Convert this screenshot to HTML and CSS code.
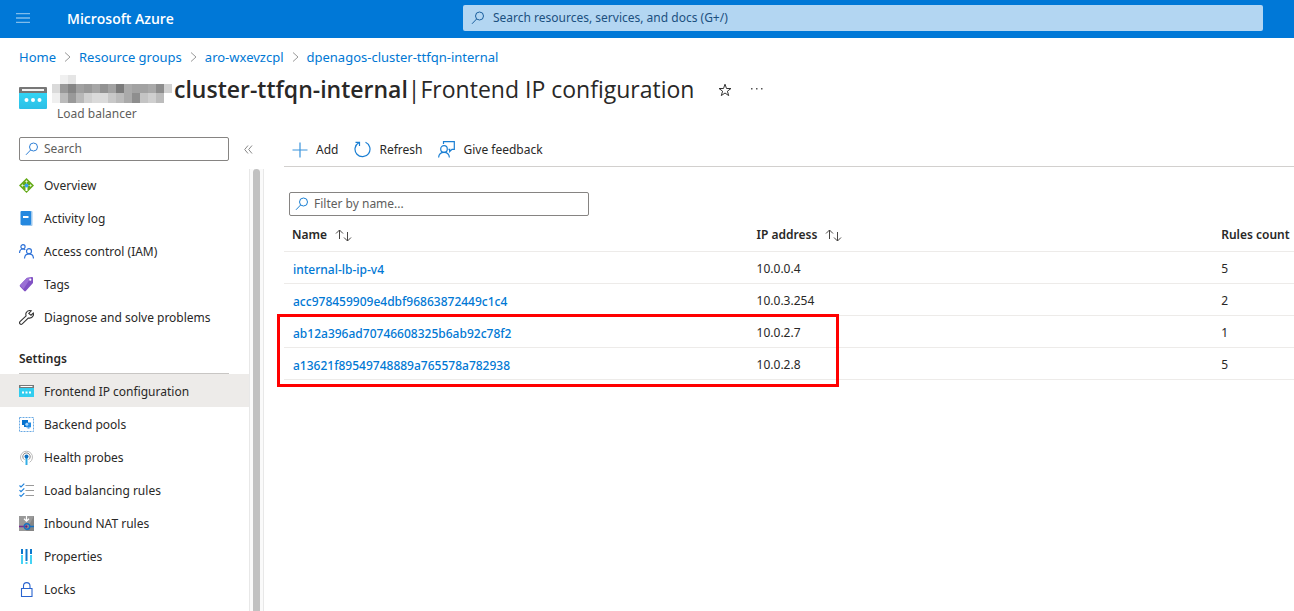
FILE: index.html
```html
<!DOCTYPE html>
<html lang="en">
<head>
<meta charset="utf-8">
<title>Frontend IP configuration - Microsoft Azure</title>
<link rel="stylesheet" href="styles.css">
</head>
<body>
<header class="topbar">
  <button class="menu-button" aria-label="Show portal menu">
    <svg width="14" height="10" viewBox="0 0 14 10"><path d="M0 .5h14M0 5h14M0 9.500h14" stroke="#80bceb" stroke-width="1.300"/></svg>
  </button>
  <a class="brand" href="#">Microsoft Azure</a>
  <label class="global-search">
    <svg width="14" height="14" viewBox="0 0 14 14" fill="none" stroke="#1b5f9e"><circle cx="8.500" cy="5" r="4"/><path d="M5.600 8 1 12.800"/></svg>
    <input type="text" aria-label="Search resources" placeholder="Search resources, services, and docs (G+/)">
  </label>
</header>

<nav class="breadcrumb" aria-label="Breadcrumb">
  <a href="#">Home</a>
  <svg width="7" height="10" viewBox="0 0 7 10"><path d="M1 .5 6 5 1 9.500"/></svg>
  <a href="#">Resource groups</a>
  <svg width="7" height="10" viewBox="0 0 7 10"><path d="M1 .5 6 5 1 9.500"/></svg>
  <a href="#">aro-wxevzcpl</a>
  <svg width="7" height="10" viewBox="0 0 7 10"><path d="M1 .5 6 5 1 9.500"/></svg>
  <a href="#">dpenagos-cluster-ttfqn-internal</a>
</nav>

<section class="heading">
  <svg class="resource-icon" width="28" height="22" viewBox="0 0 28 22">
    <defs><linearGradient id="lb" x1="0" y1="0" x2="0" y2="1"><stop offset="0" stop-color="#32d4f5"/><stop offset="1" stop-color="#2cbfe6"/></linearGradient></defs>
    <path d="M1 0h26q1 0 1 1v5H0V1q0-1 1-1z" fill="#777"/><path d="M3 2h22v2H3z" fill="#f4f4f4"/>
    <path d="M0 6h28v15q0 1-1 1H1q-1 0-1-1z" fill="url(#lb)"/>
    <circle cx="7.500" cy="13" r="2" fill="#fff"/><circle cx="14" cy="13" r="2" fill="#fff"/><circle cx="20.500" cy="13" r="2" fill="#fff"/>
  </svg>
  <div class="heading-text">
    <div class="title-row">
      <svg class="redaction" width="122" height="28" viewBox="0 0 122 28" shape-rendering="crispEdges">
        <path fill="#f0f0f0" d="M8 0h8v9H8z"/><path fill="#e5e5e5" d="M16 0h8v9h-8z"/>
        <path fill="#dadada" d="M0 9h8v9H0z"/><path fill="#999" d="M8 9h8v9H8z"/><path fill="#858585" d="M16 9h8v9h-8z"/><path fill="#a1a1a1" d="M24 9h8v9h-8z"/><path fill="#999" d="M32 9h8v9h-8z"/><path fill="#a6a6a6" d="M40 9h8v9h-8z"/><path fill="#929292" d="M48 9h8v9h-8z"/><path fill="#a2a2a2" d="M56 9h8v9h-8z"/><path fill="#7b7b7b" d="M64 9h8v9h-8z"/><path fill="#aaa" d="M72 9h8v9h-8z"/><path fill="#a2a2a2" d="M80 9h16v9H80z"/><path fill="#a9a9a9" d="M96 9h8v9h-8z"/><path fill="#8d8d8d" d="M104 9h8v9h-8z"/><path fill="#d1d1d1" d="M112 9h8v9h-8z"/>
        <path fill="#efefef" d="M0 18h8v10H0z"/><path fill="#bbb" d="M8 18h8v10H8z"/><path fill="#999" d="M16 18h8v10h-8z"/><path fill="#b8b8b8" d="M24 18h8v10h-8z"/><path fill="#d0d0d0" d="M32 18h8v10h-8z"/><path fill="#dadada" d="M40 18h16v10H40z"/><path fill="#c8c8c8" d="M56 18h8v10h-8z"/><path fill="#bbb" d="M64 18h8v10h-8z"/><path fill="#aaa" d="M72 18h8v10h-8z"/><path fill="#8e8e8e" d="M80 18h8v10h-8z"/><path fill="#c4c4c4" d="M88 18h8v10h-8z"/><path fill="#cfcfcf" d="M96 18h8v10h-8z"/><path fill="#bcbcbc" d="M104 18h8v10h-8z"/>
      </svg>
      <h1><strong>cluster-ttfqn-internal</strong> <span>|</span> <span>Frontend IP configuration</span></h1>
      <button class="star" aria-label="Add to favorites"><svg width="14" height="14" viewBox="0 0 14 14" fill="none" stroke="#333"><path d="m7 1.200 1.500 4.300H13L9.400 8.200l1.300 4.400L7 10l-3.700 2.600 1.300-4.400L1 5.500h4.500z"/></svg></button>
      <button class="more" aria-label="More"><svg width="12" height="2" viewBox="0 0 12 2" fill="#555"><path d="M0 0h1.500v1.500H0zM5 0h1.500v1.500H5zM10 0h1.500v1.500H10z"/></svg></button>
    </div>
    <p class="kind">Load balancer</p>
  </div>
</section>

<div class="workspace">
  <aside class="sidebar">
    <div class="side-search">
      <label class="field">
        <svg width="14" height="14" viewBox="0 0 14 14" fill="none" stroke="#2f7fd6"><circle cx="8.500" cy="5" r="4"/><path d="M5.600 8 1 12.800"/></svg>
        <input type="text" aria-label="Search menu" placeholder="Search">
      </label>
      <button class="collapse" aria-label="Collapse menu"><svg width="9" height="9" viewBox="0 0 9 9" fill="none" stroke="#888"><path d="M4 .5 .7 4.500 4 8.500M8 .5 4.700 4.500 8 8.500"/></svg></button>
    </div>
    <div class="side-scroll">
      <nav class="menu" aria-label="Resource menu">
        <a href="#"><svg width="15" height="15" viewBox="0 0 15 15"><path d="m7.500 0 7.500 7.500-7.500 7.500L0 7.500z" fill="#65aa18"/><path d="M7.500 2 9 4H6zM2 7.500 4 6v3zM13 7.500 11 6v3z" fill="#e6f5d0"/><path d="M7 4h1v3H7zM4 7h7v1H4z" fill="#b8dd80"/><path d="M6.500 9h2v4h-2z" fill="#fff"/><circle cx="7.500" cy="7.500" r="2" fill="#3aa0ea"/></svg>Overview</a>
        <a href="#"><svg width="15" height="15" viewBox="0 0 15 15"><path d="M3 0h9.500q1 0 1 1v13q0 1-1 1H3z" fill="#9ec8ee"/><path d="M2.500 0H11q1 0 1 1v12q0 1-1 1H2.500q-1 0-1-1V1q0-1 1-1z" fill="#2588df"/><path d="M4 5h5.500v2H4z" fill="#fff"/></svg>Activity log</a>
        <a href="#"><svg width="15" height="15" viewBox="0 0 15 15" fill="none" stroke="#2f73d8" stroke-width="1.200"><circle cx="4" cy="2.800" r="2.100"/><path d="M.6 9V8q.4-3 3.400-3 1.500 0 2.300.8"/><circle cx="10" cy="7.200" r="2.500"/><path d="M5.500 14.500q.2-4.600 4.500-4.600t4.500 4.600"/></svg>Access control (IAM)</a>
        <a href="#"><svg width="15" height="15" viewBox="0 0 15 15"><path d="M8 .8 13 0q1 0 1 1v5L6.800 14q-.8.800-1.600 0L1 9.500q-.7-.8 0-1.500z" fill="#8151c4"/><path d="m7.500 1.300 4.500-.7L4.500 12 1 8.300z" fill="#9b70d5"/><circle cx="11.300" cy="2.700" r="1.100" fill="#fff"/></svg>Tags</a>
        <a href="#"><svg width="15" height="15" viewBox="0 0 15 15" fill="none" stroke="#333" stroke-width="1.100"><path d="M12.200.8Q8.500-.2 7 3q-.4 1.500.1 2.900L1 11.600q-1 1.200 0 2.200t2.300.1L9.200 8q3.500.8 5-2.200.5-1.500.1-2.700L12 5.200 9.800 3.500z"/></svg>Diagnose and solve problems</a>
        <h2>Settings</h2>
        <a href="#" class="current" aria-current="page"><svg width="15" height="15" viewBox="0 0 15 15"><path d="M0 1h15v3H0z" fill="#777"/><path d="M1.500 2h12v1h-12z" fill="#fff"/><path d="M0 4h15v9H0z" fill="#32cdef"/><path d="M3 7.500h2v2H3zM6.500 7.500h2v2h-2zM10 7.500h2v2h-2z" fill="#fff"/></svg>Frontend IP configuration</a>
        <a href="#"><svg width="15" height="15" viewBox="0 0 15 15"><path d="M.5.500h14v14H.5z" fill="none" stroke="#69a9e3" stroke-dasharray="2 1"/><path d="M3 3h6v5H3z" fill="#0873ce"/><path d="M5 8h2v2H5z" fill="#0873ce"/><path d="M7 5.500h5v4.800H7z" fill="#238be2"/><path d="M8.500 10h2v1.700h-2z" fill="#5aa8ef"/><circle cx="7.800" cy="7.300" r="1.500" fill="#a9d5fa"/></svg>Backend pools</a>
        <a href="#"><svg width="15" height="15" viewBox="0 0 15 15" fill="none"><path d="M4.300 12.300A6 6 0 1 1 10.700 12.300" stroke="#bbb"/><path d="M5.300 9.600A3.700 3.700 0 1 1 9.700 9.600" stroke="#888"/><path d="M6.500 7h2v8h-2z" fill="#34aee5"/><circle cx="7.500" cy="6.500" r="2" fill="#0b6fc2"/></svg>Health probes</a>
        <a href="#"><svg width="15" height="15" viewBox="0 0 15 15" fill="none"><path d="M6.500 2.500H15M6.500 7.500H15M6.500 12.500H15" stroke="#999" stroke-width="1.200"/><path d="m.5 2.500 1.500 1.500L5.300.7M.5 7.200 2 8.700l3.300-3.300M.5 11.900 2 13.400l3.300-3.300" stroke="#1f83dd" stroke-width="1.200"/></svg>Load balancing rules</a>
        <a href="#"><svg width="15" height="15" viewBox="0 0 15 15" fill="none"><path d="M0 0h15v15H0z" fill="#999"/><path d="M15 0v15H7z" fill="#858585"/><path d="M7.500 0v5M5 2.800l2.500 2.400L10 2.800" stroke="#fff" stroke-width="1.200"/><path d="M0 10.500h6" stroke="#7a2a91" stroke-width="1.500"/><path d="M10 10.500h5" stroke="#1470c2" stroke-width="1.500"/><circle cx="8" cy="10.500" r="2.800" stroke="#1470c2" stroke-width="1.400"/><circle cx="7.300" cy="10.500" r="1.200" fill="#69217d"/></svg>Inbound NAT rules</a>
        <a href="#"><svg width="15" height="15" viewBox="0 0 15 15"><path d="M2 0h2v5H2zM6.500 0h2v12h-2zM11 0h2v5h-2z" fill="#0c78cc"/><path d="M2 6h2v9H2zM6.500 13h2v2h-2zM11 6h2v9h-2z" fill="#45d3f4"/></svg>Properties</a>
        <a href="#"><svg width="15" height="15" viewBox="0 0 15 15" fill="none" stroke="#2a64cf" stroke-width="1.100"><path d="M2.500 6.500h10.500v8H2.500zM4.500 6.500V4q0-3.400 3.200-3.400T11 4v2.500"/></svg>Locks</a>
      </nav>
      <div class="track"><div class="thumb"></div></div>
    </div>
  </aside>

  <main class="content">
    <div class="toolbar">
      <button><svg width="16" height="16" viewBox="0 0 16 16" fill="none" stroke="#3b94dc" stroke-width="1.200"><path d="M8 .5v15M.5 8h15"/></svg>Add</button>
      <button><svg width="17" height="17" viewBox="0 0 17 17" fill="none" stroke="#1b7fd3" stroke-width="1.200"><path d="M11.500 1.300A7.500 7.500 0 1 1 4.700 1.700M5.500 5V1.300H1.500"/></svg>Refresh</button>
      <button><svg width="17" height="17" viewBox="0 0 17 17" fill="none" stroke="#1b7fd3" stroke-width="1.200"><circle cx="6" cy="8" r="3.300"/><path d="M.6 16.500q.4-5.200 5.400-5.200t5.400 5.200M5.500 3V.7h10.800v7.600h-2.300l-2.300 2.200V8.300h-1.200"/></svg>Give feedback</button>
    </div>
    <label class="field filter">
      <svg width="14" height="14" viewBox="0 0 14 14" fill="none" stroke="#1b7fd3"><circle cx="8.500" cy="5" r="4"/><path d="M5.600 8 1 12.800"/></svg>
      <input type="text" aria-label="Filter by name" placeholder="Filter by name...">
    </label>
    <div class="table-wrap">
      <table>
        <thead>
          <tr>
            <th scope="col">Name<svg width="17" height="13" viewBox="0 0 17 13"><path d="M4.500 10V1M1 4.500 4.500 1 8 4.500M12.500 3v9M9 8.500l3.500 3.500L16 8.500"/></svg></th>
            <th scope="col">IP address<svg width="17" height="13" viewBox="0 0 17 13"><path d="M4.500 10V1M1 4.500 4.500 1 8 4.500M12.500 3v9M9 8.500l3.500 3.500L16 8.500"/></svg></th>
            <th scope="col" class="count">Rules count</th>
          </tr>
        </thead>
        <tbody>
          <tr><td><a href="#">internal-lb-ip-v4</a></td><td>10.0.0.4</td><td>5</td></tr>
          <tr><td><a href="#">acc978459909e4dbf96863872449c1c4</a></td><td>10.0.3.254</td><td>2</td></tr>
          <tr><td><a href="#">ab12a396ad70746608325b6ab92c78f2</a></td><td>10.0.2.7</td><td>1</td></tr>
          <tr><td><a href="#">a13621f89549748889a765578a782938</a></td><td>10.0.2.8</td><td>5</td></tr>
        </tbody>
      </table>
      <div class="highlight"></div>
    </div>
  </main>
</div>
</body>
</html>
```
FILE: styles.css
```css
* { box-sizing: border-box; }
body {
  margin: 0;
  height: 100vh;
  display: flex;
  flex-direction: column;
  overflow: hidden;
  background: #fff;
  color: #292827;
  font: 12px/16px "Noto Sans", "Open Sans", sans-serif;
}
a { color: #0078d4; text-decoration: none; }
svg { flex: none; display: block; }
button {
  display: flex;
  align-items: center;
  padding: 0;
  border: 0;
  background: none;
  color: inherit;
  font: inherit;
}
input {
  flex: 1;
  min-width: 0;
  padding: 0;
  border: 0;
  outline: 0;
  background: none;
  color: inherit;
  font: inherit;
}
input::placeholder { color: #605e5c; opacity: 1; }

.topbar {
  flex: none;
  display: flex;
  align-items: center;
  height: 38px;
  padding: 0 31px 2px 16px;
  background: #0078d7;
}
.brand {
  margin-left: 37px;
  padding-top: 2px;
  color: #fff;
  font: 600 14px/20px "Open Sans", sans-serif;
}
.global-search {
  display: flex;
  align-items: center;
  gap: 8px;
  width: 800px;
  max-width: 70%;
  height: 26px;
  margin-left: auto;
  padding: 0 8px;
  border-radius: 2px;
  background: #b3d6f2;
}
.global-search input::placeholder { color: #1b5080; }

.breadcrumb {
  flex: none;
  display: flex;
  align-items: center;
  gap: 8px;
  height: 38px;
  padding: 0 19px;
  font-size: 13px;
}
.breadcrumb svg { fill: none; stroke: #999; }

.heading {
  flex: none;
  display: flex;
  gap: 5px;
  height: 61px;
  padding-left: 19px;
}
.resource-icon { margin-top: 11px; }
.title-row { display: flex; align-items: center; height: 26px; }
h1 {
  display: flex;
  margin: 0;
  font: 400 23px/28px "Open Sans", sans-serif;
  white-space: nowrap;
}
strong { font-weight: 600; }
.star { margin-left: 24px; padding-top: 2px; }
.more { margin-left: 19px; }
.kind { margin: 4px 0 0 5px; color: #605e5c; }

.workspace { flex: 1; display: flex; min-height: 0; }
.sidebar { flex: none; display: flex; flex-direction: column; width: 264px; }
.side-search { flex: none; display: flex; align-items: center; gap: 15px; height: 24px; padding-left: 19px; }
.field {
  display: flex;
  align-items: center;
  gap: 5px;
  width: 210px;
  height: 24px;
  padding: 0 5px;
  border: 1px solid #868482;
  border-radius: 2px;
}
.side-scroll { flex: 1; display: flex; min-height: 0; margin-top: 8px; overflow: hidden; }
.menu { flex: 1; }
.menu a {
  display: flex;
  align-items: center;
  gap: 10px;
  height: 33px;
  padding-left: 19px;
  color: #292827;
}
.menu .current { background: #edebe9; }
.menu h2 ~ a { padding-top: 2px; }
h2 {
  height: 40px;
  margin: 0 20px 0 19px;
  padding-top: 17px;
  border-bottom: 1px solid #c8c6c4;
  font-size: 12px;
  line-height: 16px;
  font-weight: 600;
}
.track { width: 15px; padding: 0 3px; border: solid #e8e8e8; border-width: 0 1px; background: #fafafa; }
.thumb { height: 100%; border-radius: 4px 4px 0 0; background: #c1c1c1; }

.content { flex: 1; min-width: 0; padding-left: 20px; }
.toolbar { display: flex; gap: 16px; height: 30px; padding: 0 8px 4px; border-bottom: 1px solid #d2d0ce; }
.toolbar button { gap: 8px; }
.filter { width: 300px; margin: 25px 0 0 5px; }
.table-wrap { position: relative; }
table { width: 100%; border-spacing: 0; table-layout: fixed; }
th, td { height: 32px; padding: 2px 8px 0; border-bottom: 1px solid #edebe9; text-align: left; white-space: nowrap; }
th { width: 46%; height: 36px; font-weight: 600; }
th svg { display: inline-block; margin-left: 8px; vertical-align: middle; fill: none; stroke: #484644; }
th.count { width: 8%; padding-right: 0; }
td:first-child { padding: 4px 9px 0; }
td a { font-weight: 500; }
.highlight {
  position: absolute;
  top: 98px;
  left: -7px;
  width: 562px;
  height: 73px;
  border: 3px solid #f00;
  pointer-events: none;
}
```
